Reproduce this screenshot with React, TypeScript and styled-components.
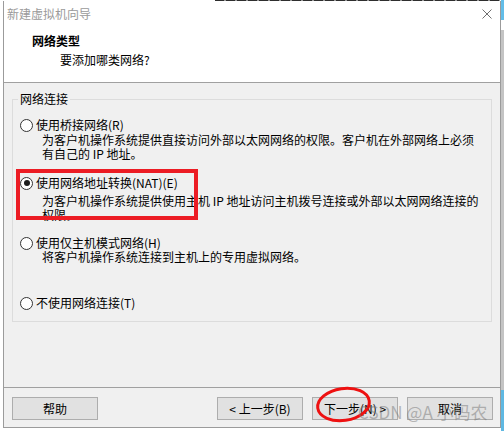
import React from "react";
import styled, { createGlobalStyle } from "styled-components";

const GlobalStyle = createGlobalStyle`
  html, body { margin: 0; padding: 0; background: #ffffff; }
  body {
    font-family: "Noto Sans CJK SC", "Microsoft YaHei", sans-serif;
    font-size: 12px;
    color: #000000;
  }
  * { box-sizing: border-box; }
`;

const Page = styled.div`
  display: flex;
  align-items: flex-start;
  width: 504px;
  height: 431px;
  padding-left: 3px;
  overflow: hidden;
  background:
    repeating-linear-gradient(to right, #2e2e2e 0 9px, #9a9a9a 9px 11px) 215px 0 / 285px 1px no-repeat,
    #ffffff;
`;

const Window = styled.div`
  position: relative;
  width: 498px;
  height: 427px;
  margin-top: 1px;
  display: flex;
  flex-direction: column;
  border: 1px solid #9b9b9b;
  border-top: none;
  background: #f0f0f0;
`;

const TitleBar = styled.div`
  height: 25px;
  flex: none;
  display: flex;
  align-items: center;
  justify-content: space-between;
  padding: 0 8px 0 3px;
  background: #ffffff;
`;

const TitleText = styled.span`
  color: #9a9a9a;
  line-height: 14px;
`;

const Header = styled.div`
  height: 57px;
  flex: none;
  padding: 8px 0 0 28px;
  background: #ffffff;
  border-bottom: 1px solid #a0a0a0;
`;

const HeadTitle = styled.div`
  font-weight: bold;
  line-height: 14px;
`;

const HeadSub = styled.div`
  margin: 5px 0 0 28px;
  line-height: 14px;
`;

const Body = styled.div`
  flex: 1;
  padding: 16px 8px 0;
`;

const Group = styled.div`
  display: flex;
  flex-direction: column;
  border: 1px solid #dcdcdc;
  padding: 0 0 11px 7px;
`;

const Legend = styled.div`
  align-self: flex-start;
  margin: -8px 0 0 -2px;
  padding: 0 2px;
  line-height: 14px;
  background: #f0f0f0;
`;

const RadioRow = styled.label<{ $top: number }>`
  display: flex;
  align-items: center;
  gap: 3px;
  height: 14px;
  margin-top: ${(p) => p.$top}px;
  line-height: 14px;
`;

const RadioCircle = styled.span<{ $checked: boolean }>`
  flex: none;
  width: 13px;
  height: 13px;
  border: 1px solid #333333;
  border-radius: 50%;
  background: #ffffff;
  display: flex;
  align-items: center;
  justify-content: center;
  &::after {
    content: "";
    display: ${(p) => (p.$checked ? "block" : "none")};
    width: 6px;
    height: 6px;
    border-radius: 50%;
    background: #1c1c1c;
  }
`;

const Desc = styled.div<{ $top: number }>`
  margin: ${(p) => p.$top}px 0 0 22px;
  line-height: 14px;
  white-space: pre;
`;

const Footer = styled.div`
  height: 40px;
  flex: none;
  display: flex;
  align-items: flex-start;
  padding: 9px 7px 0 8px;
  border-top: 1px solid #a0a0a0;
`;

const NavGroup = styled.div`
  margin-left: auto;
  display: flex;
  gap: 9px;
`;

const Button = styled.button`
  width: 86px;
  height: 23px;
  padding: 0;
  border: 1px solid #adadad;
  background: #e1e1e1;
  color: #000000;
  font-family: inherit;
  font-size: 12px;
  line-height: 21px;
  text-align: center;
`;

const RedBox = styled.div`
  position: absolute;
  left: 12px;
  top: 168px;
  width: 182px;
  height: 51px;
  border: 4px solid #ec1c24;
  pointer-events: none;
`;

const Circle = styled.svg`
  position: absolute;
  left: 308px;
  top: 382px;
  width: 64px;
  height: 44px;
  pointer-events: none;
`;

const Watermark = styled.div`
  position: absolute;
  left: 354px;
  top: 401px;
  font-size: 17px;
  line-height: 20px;
  color: rgba(120, 120, 120, 0.5);
  white-space: nowrap;
  pointer-events: none;
`;

const SideStrip = styled.div`
  width: 3px;
  height: 431px;
  display: flex;
  flex-direction: column;
`;

const StripSeg = styled.div<{ $h: number; $c: string }>`
  height: ${(p) => p.$h}px;
  flex: none;
  background: ${(p) => p.$c};
`;

type Opt = {
  label: string;
  top: number;
  desc: string[];
  descTop: number;
  checked: boolean;
};

const options: Opt[] = [
  {
    label: "使用桥接网络(R)",
    top: 12,
    desc: [
      "为客户机操作系统提供直接访问外部以太网网络的权限。客户机在外部网络上必须",
      "有自己的 IP 地址。",
    ],
    descTop: 1,
    checked: false,
  },
  {
    label: "使用网络地址转换(NAT)(E)",
    top: 15,
    desc: [
      "为客户机操作系统提供使用主机 IP 地址访问主机拨号连接或外部以太网网络连接的",
      "权限。",
    ],
    descTop: 4,
    checked: true,
  },
  {
    label: "使用仅主机模式网络(H)",
    top: 14,
    desc: ["将客户机操作系统连接到主机上的专用虚拟网络。"],
    descTop: 0,
    checked: false,
  },
  {
    label: "不使用网络连接(T)",
    top: 32,
    desc: [],
    descTop: 0,
    checked: false,
  },
];

const CloseIcon = () => (
  <svg width="10" height="10" viewBox="0 0 10 10">
    <path d="M0.5 0.5 L9.5 9.5 M9.5 0.5 L0.5 9.5" stroke="#6f6f6f" strokeWidth="1" fill="none" />
  </svg>
);

export default function App() {
  return (
    <>
      <GlobalStyle />
      <Page>
        <Window>
          <TitleBar>
            <TitleText>新建虚拟机向导</TitleText>
            <CloseIcon />
          </TitleBar>
          <Header>
            <HeadTitle>网络类型</HeadTitle>
            <HeadSub>要添加哪类网络?</HeadSub>
          </Header>
          <Body>
            <Group>
              <Legend>网络连接</Legend>
              {options.map((o) => (
                <React.Fragment key={o.label}>
                  <RadioRow $top={o.top}>
                    <RadioCircle $checked={o.checked} />
                    <span>{o.label}</span>
                  </RadioRow>
                  {o.desc.length > 0 && (
                    <Desc $top={o.descTop}>{o.desc.join("\n")}</Desc>
                  )}
                </React.Fragment>
              ))}
            </Group>
          </Body>
          <Footer>
            <Button>帮助</Button>
            <NavGroup>
              <Button>&lt; 上一步(B)</Button>
              <Button>下一步(N) &gt;</Button>
              <Button>取消</Button>
            </NavGroup>
          </Footer>
          <RedBox />
          <Circle viewBox="0 0 64 44">
            <ellipse
              cx="31.5"
              cy="21.5"
              rx="26"
              ry="16"
              transform="rotate(-8 31.5 21.5)"
              stroke="#ee1111"
              strokeWidth="3"
              fill="none"
            />
          </Circle>
          <Watermark>CSDN @A 小码农</Watermark>
        </Window>
        <SideStrip>
          <StripSeg $h={20} $c="#62bde8" />
          <StripSeg $h={10} $c="#ffffff" />
          <StripSeg $h={360} $c="#c4c4c4" />
          <StripSeg $h={41} $c="#5fb8e2" />
        </SideStrip>
      </Page>
    </>
  );
}
